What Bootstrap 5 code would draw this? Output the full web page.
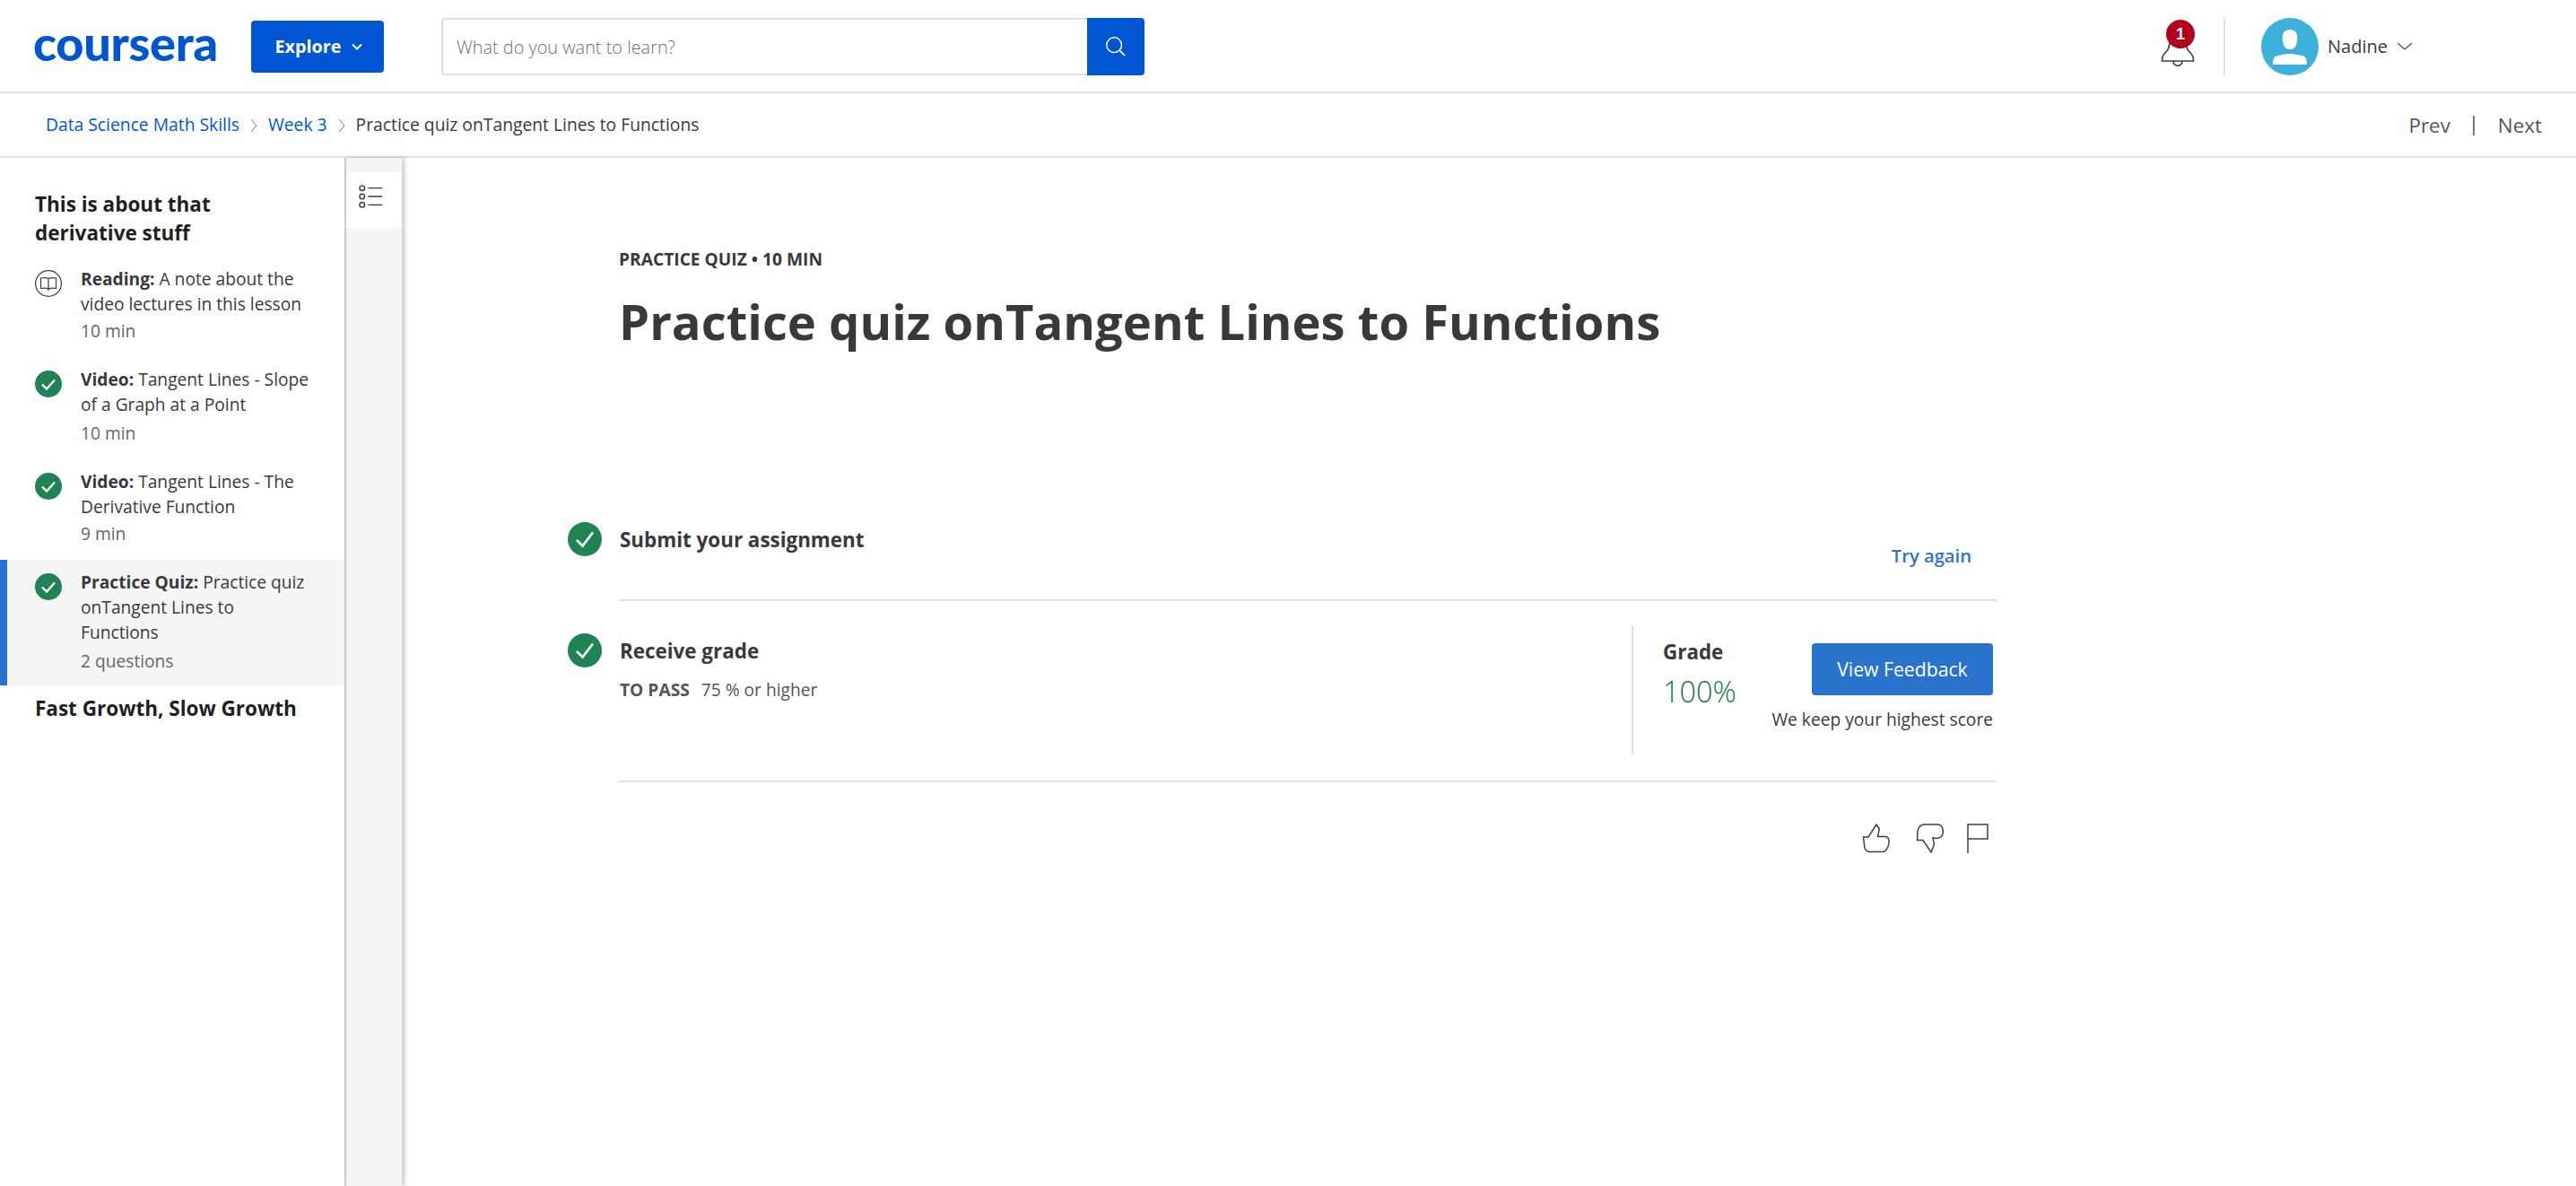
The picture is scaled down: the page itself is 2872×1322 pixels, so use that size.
<!DOCTYPE html>
<html lang="en">
<head>
<meta charset="utf-8">
<title>Practice quiz onTangent Lines to Functions</title>
<link rel="stylesheet" href="https://cdn.jsdelivr.net/npm/bootstrap@5.3.0/dist/css/bootstrap.min.css">
<style>
body{font-family:"Open Sans","Liberation Sans",sans-serif;color:#373a3c;background:#fff;min-height:1322px;overflow:hidden}
a{text-decoration:none}
.topbar{height:104px;border-bottom:2px solid #e1e1e1;padding-left:37px;padding-top:2px}
.brand{font-family:Lato,"Liberation Sans",sans-serif;font-weight:900;font-size:54px;line-height:1;letter-spacing:-.3px;color:#0056d2;width:243px;margin-top:-8px}
.explore{width:148px;height:58px;background:#0056d2;border:0;border-radius:4px;color:#fff;font-weight:700;font-size:19.8px;line-height:58px;padding:0 0 0 2px;gap:11px}
.explore:hover{background:#0056d2;color:#fff}
.search-wrap{margin-left:64px;width:784px;height:64px}
.search-input{width:720px;height:64px;border:2px solid #e1e1e1;border-right:0;border-radius:4px 0 0 4px;padding:0 15px;font-size:19.9px;font-weight:300;color:#373a3c}
.search-input::placeholder{color:#6f6f6f;opacity:1}
.search-btn{width:64px;height:64px;background:#0056d2;border:0;border-radius:0 4px 4px 0;padding:0}
.bell-box{width:44px;height:64px;margin-right:29px}
.bell-count{top:2px;left:9px;width:32px;height:32px;background:#b3001b;color:#fff;font:700 18px/32px "Liberation Sans",sans-serif;text-align:center;border-radius:50%}
.v-sep{width:2px;height:64px;background:#e1e1e1}
.avatar{width:64px;height:64px;margin-left:40px;margin-right:10px}
.user-name{font-size:20px;line-height:24px;color:#373a3c;margin-right:10px}
.user-zone{padding-right:182px}
.crumbbar{height:72px;border-bottom:2px solid #e1e1e1;padding:0 38px 0 51px}
.crumbs{font-size:19.3px;line-height:24px;color:#373a3c;margin-top:0}
.crumbs a{color:#0056d2}
.crumb-sep{margin:2px 11px 0 12px}
.pager{font-size:22.4px;line-height:28px;color:#555;margin-top:2px}
.pager-sep{width:2px;height:22px;background:#777;margin:0 26px 0 25px}
.stage{height:1146px}
.side{width:386px;flex:none;border-right:2px solid #ccc;padding-top:36px}
.week-title{font-size:22.5px;line-height:32px;font-weight:700;color:#1f1f1f;padding-left:39px;margin:0}
.lesson{padding:21px 36px 0 39px;gap:21px;font-size:19.2px;line-height:28px;color:#373a3c}
.lesson-icon{width:30px;height:30px;flex:none;margin-top:4px}
.lesson-meta{color:#666;line-height:32px;margin-top:0}
.lesson b{font-weight:700}
.lesson-a{height:112px}
.lesson-b{height:114px}
.lesson-b .lesson-meta{margin-top:2px}
.lesson-c{height:122px}
.lesson-active{height:140px;background:#f5f5f5;border-left:8px solid #2a73cc;padding-left:31px;padding-top:11px}
.lesson-active .lesson-meta{margin-top:2px}
.week-two{margin-top:10px}
.rail{width:62px;flex:none;background:#f5f5f5;padding-top:16px;box-shadow:3px 0 5px rgba(0,0,0,.22)}
.rail-btn{width:62px;height:62px;background:#fff;border-radius:0 4px 4px 0;padding:0 7px 8px 0}
.body-pane{padding-left:185px;width:1778px}
.kicker{font-size:19.2px;line-height:24px;font-weight:700;margin:101px 0 0 57px}
.page-title{font-size:54.4px;line-height:68px;font-weight:700;margin:23px 0 0 57px;color:#373a3c}
.step{width:1593px}
.step-one{margin-top:190px}
.step-two{margin-top:36px}
.step-check{width:38px;height:38px;flex:none;margin-right:19px}
.step-main{flex:1;border-bottom:2px solid #e1e1e1}
.step-main-a{height:88px}
.step-main-b{height:166px}
.step-title{font-size:22.4px;line-height:32px;font-weight:700;color:#373a3c;margin:4px 0 0 1px}
.retry{color:#2a73cc;font-size:20.2px;line-height:28px;font-weight:600;margin:23px 28px 0 0}
.pass{font-size:19.2px;line-height:26px;color:#555;margin:14px 0 0 1px}
.pass b{margin-right:8px}
.grade-box{width:403px;height:144px;border-left:2px solid #e1e1e1;margin-top:-9px;margin-right:4px;padding-left:33px}
.grade-label{font-size:22.4px;line-height:30px;font-weight:700;margin-top:15px}
.grade-num{font-size:32.4px;line-height:44px;font-weight:300;color:#17774a;margin-top:6px}
.feedback-btn{width:202px;height:58px;background:#2a73cc;border:0;border-radius:4px;color:#fff;font-size:21.2px;font-weight:500;padding:0}
.feedback-btn:hover{background:#2a73cc;color:#fff}
.keep{font-size:19.2px;line-height:26px;margin-top:14px;white-space:nowrap}
.feedback-col{margin-top:20px}
.reacts{width:1593px;padding-right:9px;margin-top:46px;gap:28px}
.flag-icon{margin-left:-3px}
</style>
</head>
<body>
<header class="topbar d-flex align-items-center">
  <a href="#" class="brand">coursera</a>
  <button class="explore btn d-flex align-items-center justify-content-center" type="button">Explore
    <svg width="12" height="8" viewBox="0 0 12 8"><path d="M1 1.500l5 5 5-5" fill="none" stroke="#fff" stroke-width="2"/></svg>
  </button>
  <form class="search-wrap d-flex">
    <input class="search-input" type="text" placeholder="What do you want to learn?">
    <button class="search-btn d-flex align-items-center justify-content-center" type="button" aria-label="Search">
      <svg width="24" height="24" viewBox="0 0 26 26"><circle cx="11" cy="11" r="9" fill="none" stroke="#fff" stroke-width="1.600"/><path d="M17.500 17.500L24 24" stroke="#fff" stroke-width="1.800"/></svg>
    </button>
  </form>
  <div class="ms-auto d-flex align-items-center user-zone">
    <div class="bell-box position-relative">
      <svg width="44" height="64" viewBox="0 0 44 64"><path d="M13 26c0 7-2 10-6 14-2 2-2.500 4-2.500 8h35c0-4-.5-6-2.500-8-4-4-6-7-6-14" fill="none" stroke="#3c4043" stroke-width="1.700"/><path d="M17 48c0 7 10 7 10 0" fill="none" stroke="#3c4043" stroke-width="1.700"/></svg>
      <span class="bell-count position-absolute">1</span>
    </div>
    <span class="v-sep"></span>
    <svg class="avatar" viewBox="0 0 64 64"><circle cx="32" cy="32" r="32" fill="#3eb0dc"/><path d="M32 13c7 0 9 5 8 13-1 6-3 9-8 9s-7-3-8-9c-1-8 1-13 8-13zM13 52c0-6 1-9 5-10 6-1 9-2 14-2s8 1 14 2c4 1 5 4 5 10z" fill="#fff"/></svg>
    <span class="user-name">Nadine</span>
    <svg width="18" height="10" viewBox="0 0 18 10"><path d="M1 1l8 7 8-7" fill="none" stroke="#555" stroke-width="1.300"/></svg>
  </div>
</header>

<nav class="crumbbar d-flex align-items-center justify-content-between">
  <div class="crumbs d-flex align-items-center">
    <a href="#">Data Science Math Skills</a>
    <svg class="crumb-sep" width="9" height="16" viewBox="0 0 9 16"><path d="M1 1l6 7-6 7" fill="none" stroke="#777" stroke-width="1"/></svg>
    <a href="#">Week 3</a>
    <svg class="crumb-sep" width="9" height="16" viewBox="0 0 9 16"><path d="M1 1l6 7-6 7" fill="none" stroke="#777" stroke-width="1"/></svg>
    <span>Practice quiz onTangent Lines to Functions</span>
  </div>
  <div class="pager d-flex align-items-center">
    <span>Prev</span><span class="pager-sep"></span><span>Next</span>
  </div>
</nav>

<div class="stage d-flex">
  <aside class="side">
    <h2 class="week-title">This is about that<br>derivative stuff</h2>
    <div class="lesson lesson-a d-flex">
      <svg class="lesson-icon" viewBox="0 0 30 30"><circle cx="15" cy="15" r="14.400" fill="#fff" stroke="#373a3c" stroke-width="1.200"/><path d="M15 9.500C13 8.500 9 8.500 6.500 9v11.500c2.500-.5 6.500-.5 8.500.5 2-1 6-1 8.500-.5V9c-2.500-.5-6.500-.5-8.500.5zM15 9.500V23" fill="none" stroke="#373a3c" stroke-width="1.200"/></svg>
      <div><div><b>Reading:</b> A note about the video lectures in this lesson</div><div class="lesson-meta">10 min</div></div>
    </div>
    <div class="lesson lesson-b d-flex">
      <svg class="lesson-icon" viewBox="0 0 30 30"><circle cx="15" cy="15" r="15" fill="#1f8354"/><path d="M8 15.500l5 5L22 10.500" fill="none" stroke="#fff" stroke-width="2.400"/></svg>
      <div><div><b>Video:</b> Tangent Lines - Slope of a Graph at a Point</div><div class="lesson-meta">10 min</div></div>
    </div>
    <div class="lesson lesson-c d-flex">
      <svg class="lesson-icon" viewBox="0 0 30 30"><circle cx="15" cy="15" r="15" fill="#1f8354"/><path d="M8 15.500l5 5L22 10.500" fill="none" stroke="#fff" stroke-width="2.400"/></svg>
      <div><div><b>Video:</b> Tangent Lines - The Derivative Function</div><div class="lesson-meta">9 min</div></div>
    </div>
    <div class="lesson lesson-active d-flex">
      <svg class="lesson-icon" viewBox="0 0 30 30"><circle cx="15" cy="15" r="15" fill="#1f8354"/><path d="M8 15.500l5 5L22 10.500" fill="none" stroke="#fff" stroke-width="2.400"/></svg>
      <div><div><b>Practice Quiz:</b> Practice quiz onTangent Lines to Functions</div><div class="lesson-meta">2 questions</div></div>
    </div>
    <h2 class="week-title week-two">Fast Growth, Slow Growth</h2>
  </aside>

  <div class="rail">
    <div class="rail-btn d-flex align-items-center justify-content-center">
      <svg width="28" height="26" viewBox="0 0 30 26"><g fill="none" stroke="#373a3c" stroke-width="1.500"><circle cx="4" cy="3" r="3"/><circle cx="4" cy="13" r="3"/><circle cx="4" cy="23" r="3"/><path d="M11 3h17M11 13h17M11 23h17"/></g></svg>
    </div>
  </div>

  <main class="body-pane">
    <div class="kicker">PRACTICE QUIZ • 10 MIN</div>
    <h1 class="page-title">Practice quiz onTangent Lines to Functions</h1>

    <div class="step step-one d-flex">
      <svg class="step-check" viewBox="0 0 38 38"><circle cx="19" cy="19" r="19" fill="#1f8354"/><path d="M10 20l6.500 6.500L28 11.500" fill="none" stroke="#fff" stroke-width="2.700"/></svg>
      <div class="step-main step-main-a d-flex justify-content-between">
        <p class="step-title">Submit your assignment</p>
        <a href="#" class="retry">Try again</a>
      </div>
    </div>

    <div class="step step-two d-flex">
      <svg class="step-check" viewBox="0 0 38 38"><circle cx="19" cy="19" r="19" fill="#1f8354"/><path d="M10 20l6.500 6.500L28 11.500" fill="none" stroke="#fff" stroke-width="2.700"/></svg>
      <div class="step-main step-main-b d-flex justify-content-between">
        <div>
          <p class="step-title">Receive grade</p>
          <div class="pass"><b>TO PASS</b> 75 % or higher</div>
        </div>
        <div class="grade-box d-flex justify-content-between">
          <div>
            <div class="grade-label">Grade</div>
            <div class="grade-num">100%</div>
          </div>
          <div class="feedback-col d-flex flex-column align-items-end">
            <button class="btn feedback-btn" type="button">View Feedback</button>
            <div class="keep">We keep your highest score</div>
          </div>
        </div>
      </div>
    </div>

    <div class="reacts d-flex justify-content-end">
      <svg width="32" height="34" viewBox="36 27 32 34"><path d="M37.500 42h5.500l9-14 3.300 5-1.800 8.500h8.500c5 .5 5.500 9 1 15-1.500 1.500-2.500 2-4 2H45c-3 0-5-1.500-6-4z" fill="none" stroke="#3c4043" stroke-width="1.500"/></svg>
      <svg width="32" height="34" viewBox="96 27 32 34"><path d="M105 28h16c5.500 1 7 9.500 3 14-1.500 1-3 1.500-5 1.500l-4-.5 1.500 7-3.500 9-9-13.500h-6.500L98 36c.5-4 3-7.500 7-8z" fill="none" stroke="#3c4043" stroke-width="1.500"/></svg>
      <svg class="flag-icon" width="24" height="34" viewBox="0 0 24 34"><path d="M1 33V1h22v16H1" fill="none" stroke="#3c4043" stroke-width="1.500"/></svg>
    </div>
  </main>
</div>
<script src="https://cdn.jsdelivr.net/npm/bootstrap@5.3.0/dist/js/bootstrap.bundle.min.js"></script>
</body>
</html>
